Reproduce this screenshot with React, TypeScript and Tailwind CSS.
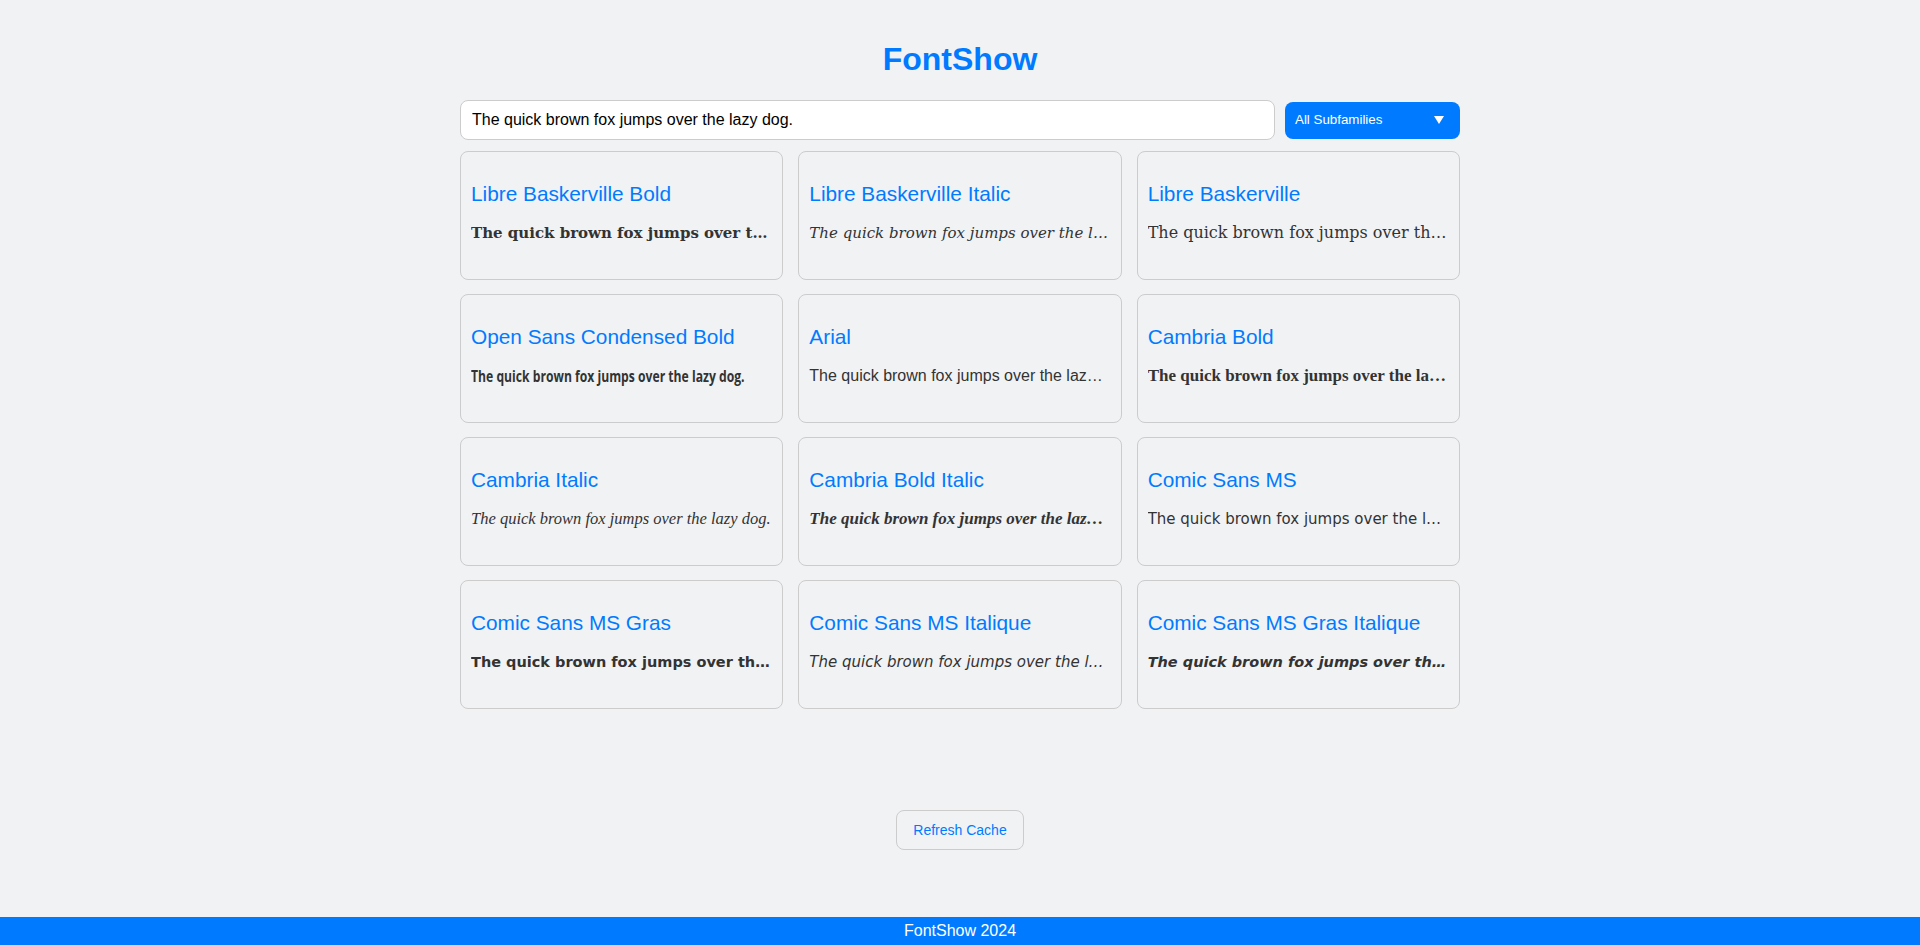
import { useState } from "react"

type FontCard = {
  name: string
  family: string
  className: string
  condensed?: boolean
}

const fonts: FontCard[] = [
  { name: "Libre Baskerville Bold", family: "font-['DejaVu_Serif',serif]", className: "font-bold text-[15px]" },
  { name: "Libre Baskerville Italic", family: "font-['DejaVu_Serif',serif]", className: "italic text-[15px]" },
  { name: "Libre Baskerville", family: "font-['DejaVu_Serif',serif]", className: "text-[16px]" },
  { name: "Open Sans Condensed Bold", family: "font-['Open_Sans',sans-serif]", className: "font-bold text-[16px]", condensed: true },
  { name: "Arial", family: "font-['Liberation_Sans',Arial,sans-serif]", className: "text-[16px]" },
  { name: "Cambria Bold", family: "font-['Liberation_Serif',serif]", className: "font-bold text-[17px]" },
  { name: "Cambria Italic", family: "font-['Liberation_Serif',serif]", className: "italic text-[16.5px]" },
  { name: "Cambria Bold Italic", family: "font-['Liberation_Serif',serif]", className: "font-bold italic text-[17px]" },
  { name: "Comic Sans MS", family: "font-['DejaVu_Sans',sans-serif]", className: "text-[15px]" },
  { name: "Comic Sans MS Gras", family: "font-['DejaVu_Sans',sans-serif]", className: "font-bold text-[14.5px]" },
  { name: "Comic Sans MS Italique", family: "font-['DejaVu_Sans',sans-serif]", className: "italic text-[15px]" },
  { name: "Comic Sans MS Gras Italique", family: "font-['DejaVu_Sans',sans-serif]", className: "font-bold italic text-[14.5px]" },
]

function Card({ font, sample }: { font: FontCard; sample: string }) {
  return (
    <div className="h-[129px] rounded-[8px] border border-[#cccccc] pl-[10px] pr-[11px] pt-[30px]">
      <h3 className="truncate text-[20.8px] leading-[24px] text-[#007bff]">{font.name}</h3>
      {font.condensed ? (
        <p className={`mt-[17px] h-[20px] leading-[20px] whitespace-nowrap text-[#333333] ${font.family} ${font.className}`}>
          <span className="inline-block origin-left scale-x-[0.76]">{sample}</span>
        </p>
      ) : (
        <p className={`mt-[17px] truncate leading-[20px] text-[#333333] ${font.family} ${font.className}`}>
          {sample}
        </p>
      )}
    </div>
  )
}

export default function App() {
  const [sample, setSample] = useState("The quick brown fox jumps over the lazy dog.")

  return (
    <div className="flex min-h-screen flex-col bg-[#f1f2f4] font-['Liberation_Sans',Arial,sans-serif]">
      <main className="mx-auto w-[1000px] flex-1 pt-[41px]">
        <h1 className="text-center text-[32px] font-bold leading-[37px] text-[#007bff]">FontShow</h1>

        <div className="mt-[22px] flex items-center gap-[10px]">
          <input
            value={sample}
            onChange={(e) => setSample(e.target.value)}
            className="h-[40px] flex-1 rounded-[8px] border border-[#cccccc] bg-white px-[11px] text-[16px] text-black outline-none"
          />
          <button
            type="button"
            className="flex h-[37px] w-[175px] items-center justify-between rounded-[8px] bg-[#007bff] pl-[10px] pr-[16px] text-[13.33px] text-white"
          >
            <span>All Subfamilies</span>
            <svg width="10" height="8" viewBox="0 0 10 8" aria-hidden="true">
              <path d="M0 0 H10 L5 8 Z" fill="white" />
            </svg>
          </button>
        </div>

        <div className="mt-[11px] grid grid-cols-3 gap-x-[15px] gap-y-[14px]">
          {fonts.map((f) => (
            <Card key={f.name} font={f} sample={sample} />
          ))}
        </div>

        <div className="mt-[101px] flex justify-center">
          <button
            type="button"
            className="h-[40px] rounded-[8px] border border-[#cccccc] px-[16px] text-[14px] text-[#007bff]"
          >
            Refresh Cache
          </button>
        </div>
      </main>

      <footer className="h-[28px] bg-[#007bff] text-center text-[16px] leading-[28px] text-white">
        FontShow 2024
      </footer>
    </div>
  )
}
